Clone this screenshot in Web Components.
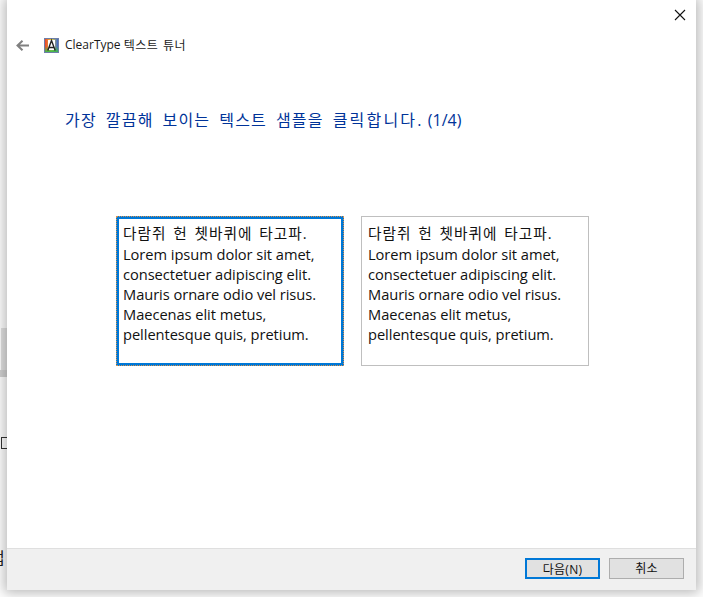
<!DOCTYPE html>
<html lang="ko">
<head>
<meta charset="utf-8">
<style>
html, body { margin: 0; padding: 0; background: #fff; }
body { width: 703px; height: 597px; overflow: hidden; font-family: "Open Sans", "Noto Sans CJK KR", sans-serif; }
</style>
</head>
<body>
<tuner-desktop>
  <tuner-window>
    <tuner-header slot="header" title-text="ClearType" title-ko="텍스트 튜너"></tuner-header>
    <tuner-heading>가장 깔끔해 보이는 텍스트 샘플을 <span style="letter-spacing:2.2px">클릭합니다.</span></tuner-heading>
    <div class="samples" style="display:flex;gap:17px;margin:77px 0 0 109px">
      <text-sample selected></text-sample>
      <text-sample></text-sample>
    </div>
    <tuner-footer slot="footer"></tuner-footer>
  </tuner-window>
</tuner-desktop>

<script>
class TunerDesktop extends HTMLElement {
    connectedCallback() {
        this.attachShadow({mode: "open"}).innerHTML = `
        <style>
            :host { display: block; position: relative; width: 703px; height: 597px; overflow: hidden; background: #fff; }
            .bit { position: absolute; left: 0; }
            .panel { top: 328px; left: 1px; width: 7px; height: 42px; background: #e2e2e2; }
            .strip { top: 370px; width: 8px; height: 7px; background: #d2d2d2; }
            .box { top: 437px; left: 1px; width: 6px; height: 10px; border: 1px solid #333; border-right: 0; }
            .txt { top: 545px; left: -10px; font: 16px "Noto Sans CJK KR", sans-serif; color: #222; }
            ::slotted(*) { position: absolute; left: 7px; top: 0; }
        </style>
        <div class="bit panel"></div>
        <div class="bit strip"></div>
        <div class="bit box"></div>
        <div class="bit txt">업</div>
        <slot></slot>`;
    }
}

class TunerWindow extends HTMLElement {
    connectedCallback() {
        this.attachShadow({mode: "open"}).innerHTML = `
        <style>
            :host { display: flex; flex-direction: column; width: 689px; height: 590px; background: #fff; box-shadow: 0 0 12px 3px rgba(0,0,0,.28); }
            main { flex: 1; display: flex; flex-direction: column; }
        </style>
        <slot name="header"></slot>
        <main><slot></slot></main>
        <slot name="footer"></slot>`;
    }
}

class TunerHeader extends HTMLElement {
    connectedCallback() {
        this.attachShadow({mode: "open"}).innerHTML = `
        <style>
            :host { display: block; height: 89px; position: relative; }
            .close { position: absolute; right: 10px; top: 9px; width: 12px; height: 12px; }
            .row { display: flex; align-items: center; padding: 37px 0 0 9px; height: 15px; }
            .back { width: 13px; height: 11px; margin-right: 15px; margin-top: 2px; }
            .icon { width: 15px; height: 15px; margin-right: 6px; margin-top: 1px; }
            span { font: 12px "Open Sans", "Noto Sans CJK KR", sans-serif; color: #1a1a1a; white-space: pre; }
            .ko { letter-spacing: .5px; word-spacing: 1px; }
        </style>
        <svg class="close" viewBox="0 0 12 12"><path d="M1 1l10 10M11 1L1 11" stroke="#111" stroke-width="1.1" fill="none"/></svg>
        <div class="row">
            <svg class="back" viewBox="0 0 13 11"><path d="M1.5 5.5H13M6.5 .7L1.5 5.5l5 4.8" stroke="#808080" stroke-width="2" fill="none"/></svg>
            <svg class="icon" viewBox="0 0 15 15">
                <defs>
                    <linearGradient id="g" x1="0" x2="1"><stop offset="0" stop-color="#e8352c"/><stop offset=".5" stop-color="#e9d23a"/><stop offset="1" stop-color="#2f5fd8"/></linearGradient>
                    <linearGradient id="h" x1="0" x2="0" y1="0" y2="1"><stop offset=".55" stop-color="#3fb94a" stop-opacity="0"/><stop offset="1" stop-color="#3fb94a"/></linearGradient>
                </defs>
                <rect x=".5" y=".5" width="14" height="14" fill="url(#g)" stroke="#6d7fa8"/>
                <rect x="1" y="1" width="13" height="13" fill="url(#h)"/>
                <rect x="4" y="2" width="7" height="10" fill="#fff"/>
                <path d="M3.8 12.5L7.5 2.5l3.7 10M5 9.5h5" stroke="#222" stroke-width="1.4" fill="none"/>
            </svg>
            <span>${this.getAttribute("title-text")} </span><span class="ko">${this.getAttribute("title-ko")}</span>
        </div>`;
    }
}

class TunerHeading extends HTMLElement {
    connectedCallback() {
        this.attachShadow({mode: "open"}).innerHTML = `
        <style>
            :host { display: block; padding-left: 58px; height: 50px; box-sizing: border-box; padding-top: 20px; font: 16px/22px "Open Sans", "Noto Sans CJK KR", sans-serif; color: #003399; white-space: nowrap; }
            .ko { letter-spacing: 1.2px; word-spacing: 3.6px; }
        </style>
        <span class="ko"><slot></slot></span> (1/4)`;
    }
}

class TextSample extends HTMLElement {
    connectedCallback() {
        this.attachShadow({mode: "open"}).innerHTML = `
        <style>
            :host { display: block; box-sizing: border-box; width: 228px; height: 150px; border: 1px solid #bfbfbf; padding: 6px 6px; font: 14.67px/20px "Open Sans", "Noto Sans CJK KR", sans-serif; color: #111; white-space: nowrap; }
            :host([selected]) { border: 3px solid #0078d7; padding: 4px 4px; outline: 1px dotted #d9914a; outline-offset: -1px; }
            .ko { height: 21px; letter-spacing: 1px; word-spacing: 2px; }
            p { margin: 0; letter-spacing: -.05px; }
        </style>
        <div class="ko">다람쥐 헌 쳇바퀴에 타고파.</div>
        <p>Lorem ipsum dolor sit amet,<br>consectetuer adipiscing elit.<br>Mauris ornare odio vel risus.<br>Maecenas elit metus,<br>pellentesque quis, pretium.</p>`;
    }
}

class TunerFooter extends HTMLElement {
    connectedCallback() {
        this.attachShadow({mode: "open"}).innerHTML = `
        <style>
            :host { display: flex; justify-content: flex-end; gap: 9px; box-sizing: border-box; height: 42px; padding: 9px 12px 0 0; background: #f0f0f0; border-top: 1px solid #dfdfdf; }
            button { box-sizing: border-box; width: 75px; height: 21px; padding: 0 0 2px; background: #e1e1e1; border: 1px solid #adadad; font: 12px "Open Sans", "Noto Sans CJK KR", sans-serif; color: #111; letter-spacing: .3px; }
            button.default { border: 2px solid #0078d7; }
        </style>
        <button class="default">다음(N)</button>
        <button>취소</button>`;
    }
}

customElements.define("tuner-desktop", TunerDesktop);
customElements.define("tuner-window", TunerWindow);
customElements.define("tuner-header", TunerHeader);
customElements.define("tuner-heading", TunerHeading);
customElements.define("text-sample", TextSample);
customElements.define("tuner-footer", TunerFooter);
</script>
</body>
</html>
